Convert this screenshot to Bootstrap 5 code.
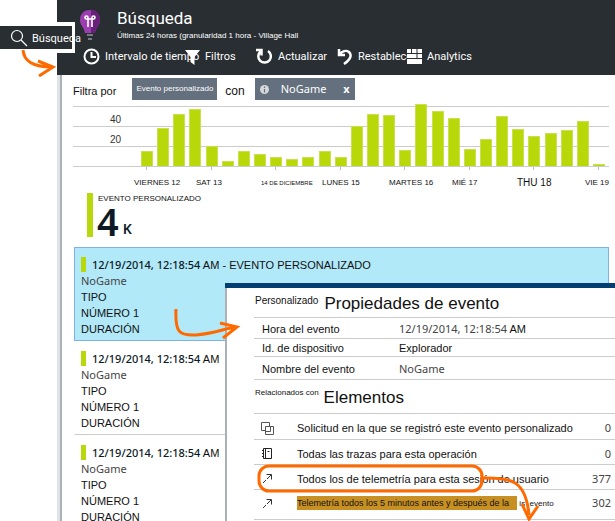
<!DOCTYPE html>
<html lang="es">
<head>
<meta charset="utf-8">
<meta name="viewport" content="width=device-width, initial-scale=1">
<title>Búsqueda</title>
<link href="https://cdn.jsdelivr.net/npm/bootstrap@5.3.0/dist/css/bootstrap.min.css" rel="stylesheet">
<style>
body{font-family:"Liberation Sans",Arial,sans-serif;font-size:11px;line-height:16px;color:#111;background:#fff}
.humanist{font-family:"Noto Sans","Open Sans",sans-serif}
.shell{height:100vh;overflow:hidden}
.page{padding-left:57px}
.bladehead{background:#292e32;color:#fff;height:75px;padding:6px 0 0 22px}
.bladehead h1{font-size:17px;line-height:24px;margin:0;font-family:Roboto,sans-serif;font-weight:400}
.tiny{font-size:8px;line-height:12px}
.micro{font-size:6px}
.titles{padding-left:16px}
.tool{background:none;border:0;color:#fff;padding:0;white-space:nowrap;display:flex;align-items:center;gap:5px;flex:none;font-family:Roboto,sans-serif}
.tool svg{flex:none}
.tools{padding-left:4px;margin-top:6px}
.w-a{width:102px}.w-b{width:71px}.w-c{width:81px}.w-d{width:70px}
.bladebody{border-left:3px solid #e0e3e5;box-shadow:inset 2px 0 #abb1b6;padding:0 6px 0 13px;min-height:calc(100vh - 75px)}
.filters{height:31px;padding-top:3px}
.filters>span{line-height:26px}
.chip{background:#64707e;color:#fff;border:0;height:22px;padding:0 4px;white-space:nowrap}
.chip.wide{width:100px;padding:0 5px}
.con{margin:0 10px 0 8px;font-size:12px}
.plot{position:relative;height:61px;border-bottom:1px solid #ccc;background:linear-gradient(#ccc 1px,transparent 1px) 0 0/100% 20px;padding:0 4px 0 68px}
.scale-labels{position:absolute;left:37px;top:4px;line-height:20px;font-size:10px;color:#333}
.column{width:12px;background:#b9d80a;border:1px solid #cbe04f;border-bottom:0;position:relative}
.column:nth-of-type(4n+1)::after{content:"";position:absolute;top:calc(100% + 1px);left:4px;width:1px;height:3px;background:#bbb}
.days{display:grid;grid-template-columns:62fr 65fr 61fr 67fr 63fr 65fr 68fr 23fr;padding-left:61px;margin-top:9px;font-size:8px;line-height:14px;white-space:nowrap}
.days .later{font-size:10px}
.metric{margin:3px 0 10px 14px;border-left:6px solid #b9d80a;height:44px;padding-left:4px}
.metric .tiny{margin-left:1px}
.big{font-size:38px;line-height:32px;font-weight:600;color:#0c1a26}
.unit{font-size:14px;line-height:16px;font-weight:600;color:#0c1a26}
.figure-row{gap:4px;height:32px}
.event{border:1px solid transparent;padding:9px 6px 4px;height:94px;margin-left:1px;white-space:nowrap}
.event+.event{border-bottom-color:#ccc}
.event.active{background:#b2e9f9;border-color:#7fb0e6}
.stamp{border-left:5px solid #b9d80a;padding-left:6px;color:#0c1a26;font-weight:500}
.soft{color:#444}
.detail{position:absolute;left:225px;right:0;top:283px;bottom:0;background:#fff;border-top:5px solid #003f70;overflow:hidden}
.detail-in{border-left:2px solid #abb1b6;padding-left:27px;min-height:100%}
.detail h2{font-size:17px;line-height:20px;margin:0;font-weight:400}
.head-a{height:29px;padding:6px 0 0 1px;gap:6px}
.head-b{height:33px;padding:8px 0 0 1px;gap:5px}
.head-a span{font-size:10px;line-height:14px}
.head-b .tiny{line-height:10px}
.props{width:100%}
.props th{font-weight:400;width:145px;padding:1px 0 0 8px}
.props td{padding:1px 0 0}
.props tr{border-top:1px solid #ccc;height:21px}
.props tr:nth-child(2){height:18px}
.props tr:last-child{height:23px;border-bottom:1px solid #ccc}
.related{border-top:1px solid #ccc;color:#111;padding:3px 4px 0 7px;text-decoration:none;height:25px;gap:23px;white-space:nowrap}
.related svg{flex:none}
.related:first-child{height:26px}
.related:last-child{height:31px;border-bottom:1px solid #ccc;padding-bottom:6px}
.hl{background:#c89022;font-size:9px;line-height:14px;padding-right:8px;display:inline-block}
.count{color:#444;margin-left:auto}
.overlay{position:absolute;left:0;top:0;pointer-events:none}
.searchbtn{position:absolute;left:0;top:22px;width:75px;height:31px;background:#292e32;color:#fff;border:solid #fff;border-width:4px 3px 4px 0;padding:0 0 0 10px;display:flex;align-items:center;gap:4px;white-space:nowrap;font-family:Roboto,sans-serif}
.searchbtn svg{flex:none}
.searchbtn span{padding-top:2px}
</style>
<script src="https://cdn.jsdelivr.net/npm/bootstrap@5.3.0/dist/js/bootstrap.bundle.min.js"></script>
</head>
<body>
<div class="shell position-relative">
<div class="page">
<header class="bladehead">
<div class="d-flex">
<svg width="22" height="36" viewBox="0 0 22 36"><path d="M11 4C4 4 1 9 1 14c0 6 5 8 5 14h10c0-6 5-8 5-14 0-5-3-10-10-10Z" fill="#9b3fb0"/><path d="M12 4c6 0 9 5 9 10 0 6-5 8-5 14h-4Z" fill="#68217a"/><path d="M9 21v-8M13 21v-8M9 13H7.500a1.500 1.500 0 1 1 1.500-1.500V13h4v-1.500a1.500 1.500 0 1 1 1.500 1.500H13" fill="none" stroke="#fff" stroke-width="1.600"/><path d="M6 27h10v1H6Z" fill="#292e32"/><path d="M8 29h6M9 33h4" stroke="#777c80" stroke-width="2"/></svg>
<div class="titles"><h1>Búsqueda</h1><div class="tiny">Últimas 24 horas (granularidad 1 hora - Village Hall</div></div>
</div>
<div class="tools d-flex">
<button class="tool w-a"><svg width="17" height="17" viewBox="0 0 17 17" fill="none" stroke="#fff" stroke-width="2"><circle cx="8.500" cy="8.500" r="7"/><path d="M8.500 4v5H13"/></svg><span>Intervalo de tiempo</span></button>
<button class="tool w-b"><svg width="15" height="16" viewBox="0 0 15 16"><path d="M0 1h15L9.500 8v8l-4-3V8Z" fill="#fff"/></svg><span>Filtros</span></button>
<button class="tool w-c"><svg width="17" height="17" viewBox="0 0 17 17" fill="none" stroke="#fff" stroke-width="2.500"><path d="M12 3a6.300 6.300 0 1 1-7.500.5M0 2h5.500v5.500"/></svg><span>Actualizar</span></button>
<button class="tool w-d"><svg width="16" height="17" viewBox="0 0 16 17" fill="none" stroke="#fff" stroke-width="2.500"><path d="M2 1v6h6M2 7c3-4 7-5 10-3 3 3 2 7-5 12"/></svg><span>Restablecer</span></button>
<button class="tool"><svg width="15" height="15" viewBox="0 0 15 15"><path d="M0 0h15v15H0Z" fill="#fff"/><path d="M0 4.500h15M0 9.500h15M4.500 0v4M10 0v9" stroke="#292e32"/></svg><span>Analytics</span></button>
</div>
</header>
<main class="bladebody">
<div class="filters d-flex align-items-start">
<span>Filtra por</span>
<button class="chip tiny ms-3">Evento personalizado</button>
<span class="con">con</span>
<button class="chip wide humanist d-flex align-items-center"><svg width="9" height="9" viewBox="0 0 9 9"><circle cx="4.500" cy="4.500" r="4.500" fill="#d5d8db"/><path d="M4.500 1.500v1.500M4.500 4v3.500" stroke="#64707e" stroke-width="1.200"/></svg><span class="ms-2 ps-1">NoGame</span><b class="ms-auto">x</b></button>
</div>
<section class="plot d-flex justify-content-between align-items-end" id="plot"><span class="scale-labels">40<br>20</span></section>
<div class="days"><span>VIERNES 12</span><span>SAT 13</span><span class="micro">14 DE DICIEMBRE</span><span>LUNES 15</span><span>MARTES 16</span><span>MIÉ 17</span><span class="later">THU 18</span><span>VIE 19</span></div>
<div class="metric"><div class="tiny">EVENTO PERSONALIZADO</div><div class="figure-row d-flex align-items-end"><span class="humanist big">4</span><span class="humanist unit">K</span></div></div>
<article class="event active"><div><span class="stamp humanist">12/19/2014, 12:18:54</span> AM - EVENTO PERSONALIZADO</div><div class="humanist soft">NoGame</div>TIPO<br>NÚMERO 1<br>DURACIÓN</article>
<article class="event"><div><span class="stamp humanist">12/19/2014, 12:18:54</span> AM</div><div class="humanist soft">NoGame</div>TIPO<br>NÚMERO 1<br>DURACIÓN</article>
<article class="event"><div><span class="stamp humanist">12/19/2014, 12:18:54</span> AM</div><div class="humanist soft">NoGame</div>TIPO<br>NÚMERO 1<br>DURACIÓN</article>
</main>
</div>
<section class="detail"><div class="detail-in">
<div class="head-a d-flex"><span>Personalizado</span><h2>Propiedades de evento</h2></div>
<table class="props">
<tr><th scope="row">Hora del evento</th><td><span class="humanist soft">12/19/2014, 12:18:54</span> AM</td></tr>
<tr><th scope="row">Id. de dispositivo</th><td>Explorador</td></tr>
<tr><th scope="row">Nombre del evento</th><td class="humanist soft">NoGame</td></tr>
</table>
<div class="head-b d-flex"><span class="tiny">Relacionados con</span><h2>Elementos</h2></div>
<nav>
<a href="#" class="related d-flex align-items-center"><svg width="13" height="13" viewBox="0 0 13 13" fill="none" stroke="#555"><path d="M4 8.500H.5v-8h8V4M4.500 4.500h8v8h-8ZM4.500 9.500h5v-5"/></svg><span>Solicitud en la que se registró este evento personalizado</span><span class="count humanist">0</span></a>
<a href="#" class="related d-flex align-items-center"><svg width="13" height="13" viewBox="0 0 13 13" fill="none" stroke="#222"><path d="M2.500 1.500h8v10h-8ZM4.500 1.500v10M6.500 4.500h2M1 3.500h2M1 6.500h2M1 9.500h2"/></svg><span>Todas las trazas para esta operación</span><span class="count humanist">0</span></a>
<a href="#" class="related d-flex align-items-center"><svg width="13" height="13" viewBox="0 0 13 13" fill="none" stroke="#333"><path d="m2 11 3-3m1-1 4-4M5.500 2.500h5v5"/></svg><span>Todos los de telemetría para esta sesión de usuario</span><span class="count humanist">377</span></a>
<a href="#" class="related d-flex align-items-center"><svg width="13" height="13" viewBox="0 0 13 13" fill="none" stroke="#333"><path d="m2 11 3-3m1-1 4-4M5.500 2.500h5v5"/></svg><span class="tiny"><span class="hl">Telemetría todos los 5 minutos antes y después de la</span> is&nbsp; evento</span><span class="count humanist">302</span></a>
</nav>
</div></section>
<button class="searchbtn"><svg width="18" height="18" viewBox="0 0 18 18" fill="none" stroke="#fff" stroke-width="1.200"><circle cx="7" cy="7" r="5.500"/><path d="m11 11 6 6"/></svg><span>Búsqueda</span></button>
<svg class="overlay" width="615" height="521" viewBox="0 0 615 521" fill="none" stroke="#ff6a00" stroke-width="3"><path d="M23 50c1 11 9 17 29 17M38 61l15 6-14 9M176 309c-1 22 2 27 20 26 15-1 25-5 39-8M220 323l17 4-14 11"/><rect x="259" y="466" width="223" height="25" rx="10"/><path d="M482 478c30-1 44 3 47 37M522 504l7 15 9-13"/></svg>
</div>
<script>
const heights=[15,38,52,57,20,5,15,12,9,7,9,15,9,40,52,51,16,62,55,48,17,27,50,37,30,33,36,45,2];
const plot=document.getElementById('plot');
for(const h of heights){const bar=document.createElement('div');bar.className='column';bar.style.height=h+'px';plot.append(bar)}
</script>
</body>
</html>
